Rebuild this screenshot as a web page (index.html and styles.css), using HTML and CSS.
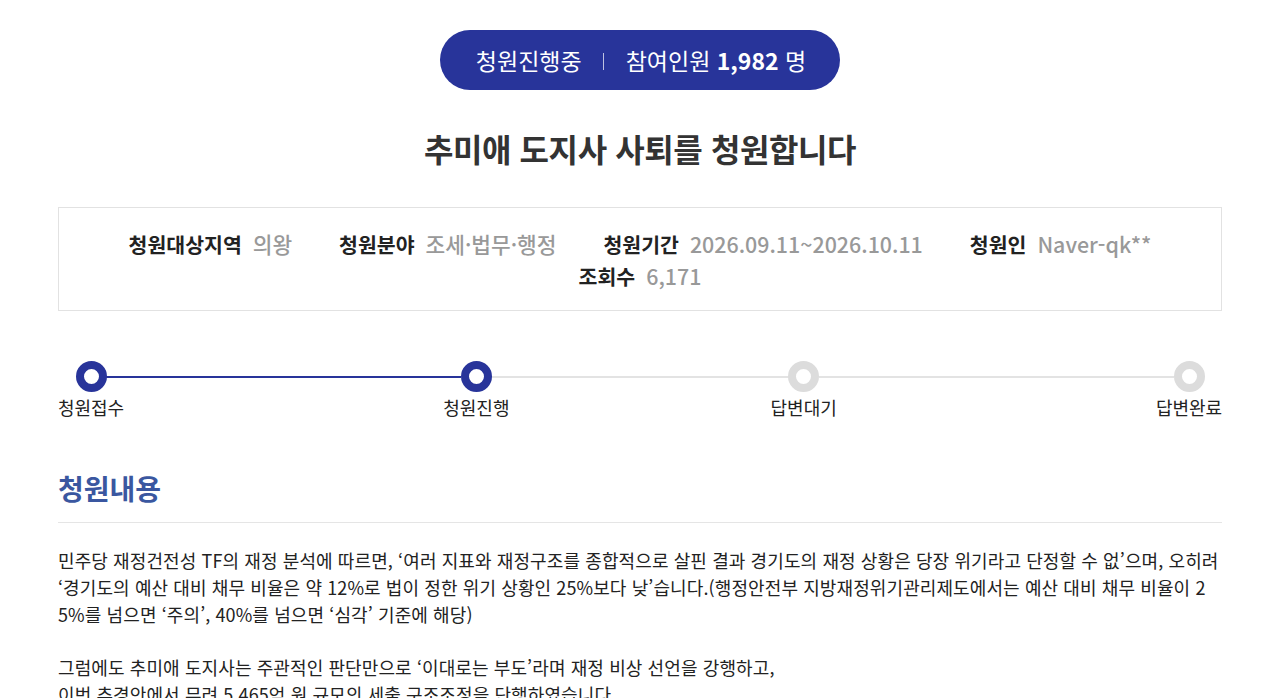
FILE: index.html
```html
<!DOCTYPE html>
<html lang="ko">
<head>
<meta charset="utf-8">
<title>추미애 도지사 사퇴를 청원합니다</title>
<link rel="stylesheet" href="styles.css">
</head>
<body>
<main class="page">
  <div class="status-wrap">
    <div class="status-pill">
      <span class="status">청원진행중</span>
      <span class="divider"></span>
      <span class="count">참여인원 <b>1,982</b> 명</span>
    </div>
  </div>

  <h1 class="title">추미애 도지사 사퇴를 청원합니다</h1>

  <section class="info-box">
    <div class="info-row">
      <span class="info-item"><span class="label">청원대상지역</span><span class="value">의왕</span></span>
      <span class="info-item"><span class="label">청원분야</span><span class="value">조세·법무·행정</span></span>
      <span class="info-item"><span class="label">청원기간</span><span class="value">2026.09.11~2026.10.11</span></span>
      <span class="info-item"><span class="label">청원인</span><span class="value">Naver-qk**</span></span>
    </div>
    <div class="info-row">
      <span class="info-item"><span class="label">조회수</span><span class="value">6,171</span></span>
    </div>
  </section>

  <section class="steps">
    <div class="step done"><span class="dot"></span><span class="step-label">청원접수</span></div>
    <div class="link done link-a"></div>
    <div class="step done"><span class="dot"></span><span class="step-label">청원진행</span></div>
    <div class="link link-b"></div>
    <div class="step"><span class="dot"></span><span class="step-label">답변대기</span></div>
    <div class="link link-a"></div>
    <div class="step"><span class="dot"></span><span class="step-label">답변완료</span></div>
  </section>

  <section class="content">
    <h2 class="content-title">청원내용</h2>
    <div class="content-body">
      <p>민주당 재정건전성 TF의 재정 분석에 따르면, ‘여러 지표와 재정구조를 종합적으로 살핀 결과 경기도의 재정 상황은 당장 위기라고 단정할 수 없’으며, 오히려 ‘경기도의 예산 대비 채무 비율은 약 12%로 법이 정한 위기 상황인 25%보다 낮’습니다.(행정안전부 지방재정위기관리제도에서는 예산 대비 채무 비율이 25%를 넘으면 ‘주의’, 40%를 넘으면 ‘심각’ 기준에 해당)</p>
      <p>그럼에도 추미애 도지사는 주관적인 판단만으로 ‘이대로는 부도’라며 재정 비상 선언을 강행하고,<br>이번 추경안에서 무려 5,465억 원 규모의 세출 구조조정을 단행하였습니다.</p>
    </div>
  </section>
</main>
</body>
</html>
```

FILE: styles.css
```css
* { box-sizing: border-box; }
html, body { margin: 0; padding: 0; background: #fff; }
body {
  font-family: "Noto Sans CJK KR", "Noto Sans", sans-serif;
  color: #222;
}
.page {
  width: 1164px;
  margin: 0 auto;
  padding-top: 30px;
}
.status-wrap { display: flex; justify-content: center; }
.status-pill {
  width: 400px;
  height: 60px;
  border-radius: 30px;
  background: #28349a;
  color: #fff;
  display: flex;
  align-items: center;
  justify-content: center;
  font-size: 23px;
  padding-left: 2px;
}
.status-pill .divider {
  width: 1px;
  height: 17px;
  background: rgba(255,255,255,0.7);
  margin: 3px 22px 0 21px;
}
.status-pill b { font-weight: 700; }
.title {
  margin: 34px 0 0;
  text-align: center;
  font-size: 32px;
  font-weight: 700;
  color: #333;
  line-height: 48px;
  letter-spacing: -0.4px;
}
.info-box {
  margin-top: 35px;
  border: 1px solid #e2e2e2;
  padding: 20px 0 18px;
  display: flex;
  flex-direction: column;
  align-items: center;
}
.info-row {
  display: flex;
  justify-content: center;
  align-items: baseline;
  gap: 47px;
  line-height: 31px;
}
.info-item { display: flex; align-items: baseline; }
.info-item .label { font-size: 20.5px; font-weight: 700; color: #222; margin-right: 11px; }
.info-item .value { font-size: 21.4px; color: #999; font-weight: 500; }
.steps {
  margin-top: 50px;
  display: flex;
  align-items: flex-start;
}
.step {
  position: relative;
  z-index: 1;
  display: flex;
  flex-direction: column;
  align-items: center;
  width: 66px;
  flex: none;
}
.dot {
  width: 31px;
  height: 31px;
  border-radius: 50%;
  border: 8px solid #dcdcdc;
  background: #fff;
}
.step.done .dot { border-color: #28349a; }
.step-label {
  margin-top: 2px;
  font-size: 18px;
  line-height: 26px;
  color: #222;
  white-space: nowrap;
}
.link {
  height: 2px;
  margin: 15px -18px 0;
  background: #e3e3e3;
  flex-basis: 0;
}
.link.done { background: #28349a; }
.link-a { flex-grow: 355; }
.link-b { flex-grow: 297; }
.content { margin-top: 48px; }
.content-title {
  margin: 0;
  font-size: 28px;
  font-weight: 700;
  color: #3a57a0;
  line-height: 40px;
  padding-bottom: 14px;
  border-bottom: 1px solid #e5e5e5;
}
.content-body {
  padding-top: 24px;
  font-size: 18px;
  line-height: 27px;
  color: #222;
  letter-spacing: 0.1px;
  word-break: break-all;
}
.content-body p { margin: 0 0 26px; }
```
